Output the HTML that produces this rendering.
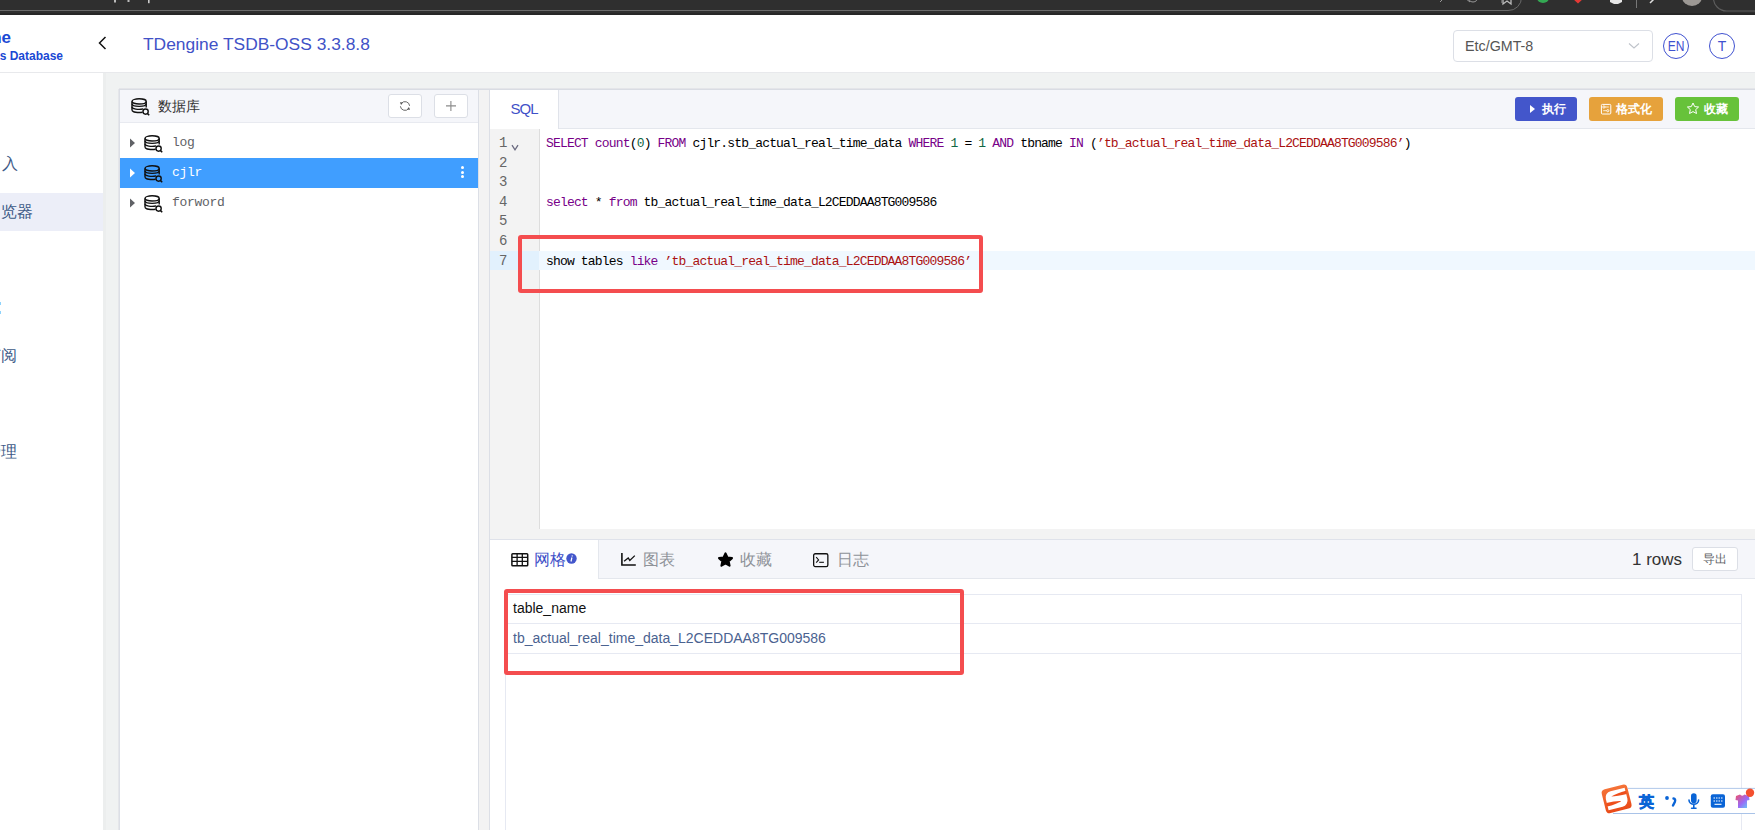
<!DOCTYPE html>
<html><head><meta charset="utf-8">
<style>
*{box-sizing:border-box;margin:0;padding:0}
html,body{width:1755px;height:830px;overflow:hidden;background:#f0f2f2;font-family:"Liberation Sans",sans-serif;color:#333}
.a{position:absolute}
.mono{font-family:"Liberation Mono",monospace}
.t{white-space:pre;line-height:1}
.code{font-family:"Liberation Mono",monospace;font-size:13px;letter-spacing:-0.83px;white-space:pre;color:#000;line-height:19.6px;height:19.6px}
.k{color:#708}.n{color:#164}.s{color:#a11}
.ln{font-family:"Liberation Mono",monospace;font-size:14px;color:#666;width:20px;text-align:left;line-height:19.6px}
.redbox{border:4px solid #f44d4f;border-radius:3px}
</style></head><body>
<!-- browser chrome strip -->
<svg class="a" style="left:0;top:0" width="1755" height="15" viewBox="0 0 1755 15">
 <rect x="0" y="0" width="1755" height="15" fill="#2f2f2f"/>
 <rect x="0" y="13" width="1755" height="2" fill="#272727"/>
 <path d="M-5 10.5 H1508 A13 13 0 0 0 1521.5 -3" fill="none" stroke="#6a6a6a" stroke-width="1"/>
 <path d="M1713.5 -3 A13 13 0 0 0 1727 11 H1760" fill="none" stroke="#5c5c5c" stroke-width="1.2"/>
 <ellipse cx="1543" cy="-2" rx="6" ry="5" fill="#34a853"/>
 <path d="M1572 -2 L1578 3.5 L1584 -2 Z" fill="#e53935"/>
 <path d="M1610 -2 H1622 V2 L1618 4 L1614 4 L1610 2 Z" fill="#e6e6e6"/>
 <rect x="1636" y="0" width="1" height="8" fill="#777"/>
 <path d="M1650 3 L1656 -3" stroke="#ddd" stroke-width="1.5"/>
 <ellipse cx="1692" cy="-3" rx="10" ry="9" fill="#9c9894"/>
 <path d="M1465 -2 L1470 2 M1440 2 L1444 -2" stroke="#999" stroke-width="1"/>
 <circle cx="1473" cy="-3" r="5" fill="none" stroke="#999" stroke-width="1"/>
 <rect x="1501" y="-3" width="1" height="6" fill="#666"/>
 <rect x="114" y="0" width="2" height="2.5" fill="#bbb"/>
 <rect x="127.5" y="0" width="2" height="2" fill="#bbb"/>
 <rect x="148" y="0" width="1.6" height="3.2" fill="#ccc"/>
 <path d="M1503 -2 V4 L1507 1 L1511 4 V-2" fill="none" stroke="#bbb" stroke-width="1.3"/>
</svg>
<!-- header -->
<div class="a" style="left:0;top:15px;width:1755px;height:58px;background:#fff;border-bottom:1px solid #e8e9ec"></div>
<div class="a t" style="right:1744px;top:29px;font-size:17px;font-weight:700;color:#1a48d4">TDengine</div>
<div class="a t" style="right:1692px;top:49.5px;font-size:12px;font-weight:700;color:#1a48d4">Time-Series Database</div>
<svg class="a" style="left:96px;top:35px" width="14" height="16" viewBox="0 0 14 16"><path d="M9.5 2 L3.5 8 L9.5 14" fill="none" stroke="#111" stroke-width="1.5"/></svg>
<div class="a t" style="left:143px;top:36px;font-size:17.4px;color:#4152c7">TDengine TSDB-OSS 3.3.8.8</div>

<div class="a" style="left:1453px;top:30px;width:200px;height:32px;border:1px solid #dcdfe6;border-radius:4px;background:#fff"></div>
<div class="a t" style="left:1465px;top:39px;font-size:14.3px;color:#555">Etc/GMT-8</div>
<svg class="a" style="left:1627px;top:41px" width="14" height="9" viewBox="0 0 14 9"><path d="M2 2.5 L7 7 L12 2.5" fill="none" stroke="#bfc3ca" stroke-width="1.1"/></svg>
<div class="a" style="left:1663px;top:33px;width:26px;height:26px;border:1.4px solid #3f51d0;border-radius:50%"></div>
<div class="a t" style="left:1663px;top:39px;width:26px;text-align:center;font-size:14px;color:#3f51d0;transform:scaleX(0.86)">EN</div>
<div class="a" style="left:1709px;top:33px;width:26px;height:26px;border:1.4px solid #3f51d0;border-radius:50%"></div>
<div class="a t" style="left:1709px;top:39px;width:26px;text-align:center;font-size:14px;color:#3f51d0">T</div>

<!-- sidebar -->
<div class="a" style="left:0;top:73px;width:103px;height:757px;background:#fff"></div>
<div class="a" style="left:0;top:193px;width:103px;height:38px;background:#eceef8"></div>
<div class="a t" style="left:1.5px;top:156px;font-size:15.5px;color:#3d5a87">入</div>
<div class="a t" style="left:0.8px;top:204px;font-size:15.5px;color:#3d5a87">览器</div>
<div class="a t" style="left:-15.5px;top:348px;font-size:15.5px;color:#3d5a87">订阅</div>
<div class="a t" style="left:-15.5px;top:444px;font-size:15.5px;color:#3d5a87">管理</div>
<div class="a" style="left:0;top:302px;width:1px;height:3px;background:#8fd3fb"></div>
<div class="a" style="left:0;top:311px;width:1px;height:3px;background:#8fd3fb"></div>

<div class="a" style="left:103px;top:73px;width:3px;height:757px;background:#eceeee"></div>
<div class="a" style="left:118px;top:89px;width:1px;height:741px;background:#e5e6ea"></div>
<!-- left db panel -->
<div class="a" style="left:119px;top:88px;width:1650px;height:760px;background:#f3f3f3;border-top:1px solid #e4e5e9"></div><div class="a" style="left:119px;top:89px;width:1650px;height:1px;background:#d9dce3"></div>
<div class="a" style="left:119px;top:90px;width:360px;height:760px;background:#fff;border:1px solid #dcdfe6;border-top:none"></div>
<div class="a" style="left:120px;top:90px;width:358px;height:33px;background:#f5f6fa;border-bottom:1px solid #e8eaf0"></div>
<svg width="0" height="0" style="position:absolute"><defs>
<symbol id="db" viewBox="0 0 20 18">
 <g fill="none" stroke="currentColor" stroke-width="1.4">
  <ellipse cx="9.1" cy="3.4" rx="7.1" ry="2.6"/>
  <path d="M2 3.4 V12.2 M16.2 3.4 V9.6"/>
  <path d="M2 5.8 A7.1 2.6 0 0 0 16.2 5.8"/>
  <path d="M2 8.7 A7.1 2.6 0 0 0 13.2 10.9"/>
  <path d="M2 12.2 A7.1 2.6 0 0 0 12.6 14.2"/>
 </g>
 <circle cx="15.6" cy="13.6" r="2.6" fill="var(--bg)" stroke="currentColor" stroke-width="1.4"/>
 <path d="M17.4 15.5 L19.2 17.3" stroke="currentColor" stroke-width="1.6"/>
</symbol></defs></svg>
<svg class="a" style="left:130px;top:98px;color:#111;--bg:#f5f6fa" width="20" height="18"><use href="#db"/></svg>
<div class="a t" style="left:158px;top:99px;font-size:14px;color:#333">数据库</div>
<div class="a" style="left:388px;top:94px;width:34px;height:24px;background:#fff;border:1px solid #dcdfe6;border-radius:3px"></div>
<svg class="a" style="left:399px;top:100px" width="12" height="12" viewBox="0 0 12 12"><g fill="none" stroke="#666" stroke-width="1"><path d="M2.4 3.4 A4.6 4.6 0 0 1 10.6 5.8"/><path d="M9.6 8.6 A4.6 4.6 0 0 1 1.4 6.3"/></g><path d="M0.9 2.3 L3.9 2.4 L2.1 4.9 Z M11.1 9.7 L8.1 9.6 L9.9 7.1 Z" fill="#555"/></svg>
<div class="a" style="left:434px;top:94px;width:34px;height:24px;background:#fff;border:1px solid #dcdfe6;border-radius:3px"></div>
<svg class="a" style="left:445px;top:100px" width="12" height="12" viewBox="0 0 12 12"><path d="M5.9 1 V11 M1 5.9 H11" stroke="#8a8a8a" stroke-width="1.1"/></svg>

<!-- tree -->
<div class="a" style="left:120px;top:158px;width:358px;height:30px;background:#409eff"></div>
<svg class="a" style="left:129px;top:138px" width="7" height="10" viewBox="0 0 7 10"><path d="M1 0.5 L6 5 L1 9.5Z" fill="#606266"/></svg>
<svg class="a" style="left:129px;top:168px" width="7" height="10" viewBox="0 0 7 10"><path d="M1 0.5 L6 5 L1 9.5Z" fill="#fff"/></svg>
<svg class="a" style="left:129px;top:198px" width="7" height="10" viewBox="0 0 7 10"><path d="M1 0.5 L6 5 L1 9.5Z" fill="#606266"/></svg>
<svg class="a" style="left:143px;top:135px;color:#111;--bg:#fff" width="20" height="18"><use href="#db"/></svg>
<svg class="a" style="left:143px;top:165px;color:#111;--bg:#409eff" width="20" height="18"><use href="#db"/></svg>
<svg class="a" style="left:143px;top:195px;color:#111;--bg:#fff" width="20" height="18"><use href="#db"/></svg>
<div class="a t mono" style="left:172px;top:136px;font-size:13px;letter-spacing:-0.3px;color:#606266">log</div>
<div class="a t mono" style="left:172px;top:166px;font-size:13px;letter-spacing:-0.3px;color:#fff">cjlr</div>
<div class="a t mono" style="left:172px;top:196px;font-size:13px;letter-spacing:-0.3px;color:#606266">forword</div>
<div class="a" style="left:461px;top:166px;width:3px;height:3px;border-radius:50%;background:#fff"></div>
<div class="a" style="left:461px;top:170.5px;width:3px;height:3px;border-radius:50%;background:#fff"></div>
<div class="a" style="left:461px;top:175px;width:3px;height:3px;border-radius:50%;background:#fff"></div>

<!-- right panel -->
<div class="a" style="left:489px;top:90px;width:1280px;height:760px;background:#fff;border:1px solid #dcdfe6;border-top:none"></div>
<div class="a" style="left:490px;top:90px;width:1270px;height:39px;background:#f5f6fa;border-bottom:1px solid #e4e7ed"></div>
<div class="a" style="left:490px;top:90px;width:69px;height:39px;background:#fff;border-right:1.5px solid #e0e3ea"></div>
<div class="a t" style="left:510.5px;top:101px;font-size:15px;letter-spacing:-1px;color:#3f51c8">SQL</div>

<!-- action buttons -->
<div class="a" style="left:1515px;top:97px;width:62px;height:24px;background:#4356cb;border-radius:3px"></div>
<svg class="a" style="left:1529px;top:104px" width="7" height="10" viewBox="0 0 7 10"><path d="M1 1 L6 5 L1 9Z" fill="#fff"/></svg>
<div class="a t" style="left:1542px;top:103px;font-size:12px;font-weight:700;color:#fff">执行</div>
<div class="a" style="left:1589px;top:97px;width:74px;height:24px;background:#e6a23c;border-radius:3px"></div>
<svg class="a" style="left:1600px;top:103px" width="12" height="12" viewBox="0 0 12 12"><rect x="1.4" y="1.4" width="9.4" height="9.6" rx="1" fill="none" stroke="#fff" stroke-width="1"/><circle cx="3.9" cy="4" r="1.1" fill="none" stroke="#fff" stroke-width="0.9"/><path d="M5 4 H8.8 M3.2 7.7 H6.6" stroke="#fff" stroke-width="0.8"/><circle cx="7.8" cy="7.7" r="1.1" fill="none" stroke="#fff" stroke-width="0.9"/></svg>
<div class="a t" style="left:1616px;top:103px;font-size:12px;font-weight:700;color:#fff">格式化</div>
<div class="a" style="left:1675px;top:97px;width:64px;height:24px;background:#67c23a;border-radius:3px"></div>
<svg class="a" style="left:1686px;top:102px" width="14" height="13" viewBox="0 0 14 13"><path d="M7 1 L8.7 4.6 L12.6 5 L9.7 7.6 L10.5 11.5 L7 9.6 L3.5 11.5 L4.3 7.6 L1.4 5 L5.3 4.6 Z" fill="none" stroke="#fff" stroke-width="1" stroke-linejoin="round"/></svg>
<div class="a t" style="left:1704px;top:102.5px;font-size:12px;font-weight:700;color:#fff">收藏</div>

<!-- editor -->
<div class="a" style="left:490px;top:129px;width:50px;height:400px;background:#f3f3f3;border-right:1px solid #ddd"></div>
<div class="a" style="left:490px;top:251px;width:1265px;height:19px;background:#f0f8ff"></div>
<div class="a" style="left:490px;top:251px;width:49px;height:19px;background:#e2f1fd"></div>
<div class="a" style="left:499px;top:134px">
 <div class="ln">1</div><div class="ln">2</div><div class="ln">3</div><div class="ln">4</div><div class="ln">5</div><div class="ln">6</div><div class="ln">7</div>
</div>
<svg class="a" style="left:511px;top:144px" width="8" height="7" viewBox="0 0 8 7"><path d="M1 1.2 L4 5.8 L7 1.2" fill="none" stroke="#6a6a80" stroke-width="1.3"/></svg>
<div class="a" style="left:546px;top:134.4px">
 <div class="code"><span class="k">SELECT</span> <span class="k">count</span>(<span class="n">0</span>) <span class="k">FROM</span> cjlr.stb_actual_real_time_data <span class="k">WHERE</span> <span class="n">1</span> = <span class="n">1</span> <span class="k">AND</span> tbname <span class="k">IN</span> (<span class="s">&#8217;tb_actual_real_time_data_L2CEDDAA8TG009586&#8217;</span>)</div>
 <div class="code"> </div>
 <div class="code"> </div>
 <div class="code"><span class="k">select</span> * <span class="k">from</span> tb_actual_real_time_data_L2CEDDAA8TG009586</div>
 <div class="code"> </div>
 <div class="code"> </div>
 <div class="code">show tables <span class="k">like</span> <span class="s">&#8217;tb_actual_real_time_data_L2CEDDAA8TG009586&#8217;</span></div>
</div>
<div class="a redbox" style="left:518px;top:235px;width:465px;height:58px"></div>

<!-- splitter gap -->
<div class="a" style="left:490px;top:529px;width:1265px;height:11px;background:#f3f3f3;border-bottom:1px solid #dfe2ea"></div>

<!-- results tab bar -->
<div class="a" style="left:490px;top:540px;width:1265px;height:39px;background:#f5f6fa;border-bottom:1px solid #e4e7ed"></div>
<div class="a" style="left:490px;top:540px;width:109px;height:39px;background:#fff;border-right:1px solid #e4e7ed"></div>
<svg class="a" style="left:510px;top:552px" width="19" height="15" viewBox="0 0 19 15"><rect x="1.9" y="1.8" width="15.8" height="11.9" rx="0.8" fill="none" stroke="#111" stroke-width="1.5"/><path d="M1.9 5.3 H17.7 M1.9 9.4 H17.7 M7.1 1.8 V13.7 M12.3 1.8 V13.7" stroke="#111" stroke-width="1.3"/></svg>
<div class="a t" style="left:534px;top:551.5px;font-size:15.5px;color:#3f51c8">网格</div>
<svg class="a" style="left:566px;top:553px" width="11" height="11" viewBox="0 0 11 11"><circle cx="5.5" cy="5.5" r="5.2" fill="#4356cb"/><path d="M5.9 4.5 L5 8.5" stroke="#fff" stroke-width="1.2"/><circle cx="6.2" cy="2.9" r="0.7" fill="#fff"/></svg>
<svg class="a" style="left:620px;top:552px" width="17" height="15" viewBox="0 0 17 15"><path d="M1.9 1 V13 H15.8" fill="none" stroke="#111" stroke-width="1.6"/><path d="M4.1 9.2 L8.2 5.9 L9.8 8.4 L14.8 3.6" fill="none" stroke="#111" stroke-width="1.3"/></svg>
<div class="a t" style="left:643px;top:552px;font-size:15.5px;color:#8f9399">图表</div>
<svg class="a" style="left:717px;top:551px" width="17" height="17" viewBox="0 0 17 17"><path d="M8.5 2.4 L10.5 6.6 L14.9 7.1 L11.6 10.2 L12.5 14.6 L8.5 12.4 L4.5 14.6 L5.4 10.2 L2.1 7.1 L6.5 6.6 Z" fill="#000" stroke="#000" stroke-width="2.2" stroke-linejoin="round"/></svg>
<div class="a t" style="left:740px;top:552px;font-size:15.5px;color:#8f9399">收藏</div>
<svg class="a" style="left:812px;top:552px" width="17" height="16" viewBox="0 0 17 16"><rect x="1.65" y="1.75" width="14.2" height="12.8" rx="1.6" fill="none" stroke="#111" stroke-width="1.3"/><path d="M4.2 5.2 L6.6 7.9 L4.2 10.6" fill="none" stroke="#111" stroke-width="1.1"/><path d="M7.2 10.3 H11.9" stroke="#111" stroke-width="1.1"/></svg>
<div class="a t" style="left:837px;top:552px;font-size:15.5px;color:#8f9399">日志</div>
<div class="a t" style="left:1632px;top:551px;font-size:17px;color:#333">1 rows</div>
<div class="a" style="left:1692px;top:547px;width:46px;height:24px;background:#fff;border:1px solid #dcdfe6;border-radius:3px"></div>
<div class="a t" style="left:1703px;top:553px;font-size:12px;color:#606266">导出</div>

<!-- results table -->
<div class="a" style="left:505px;top:594px;width:1237px;height:250px;border:1px solid #e6e9f2"></div>
<div class="a" style="left:505px;top:623px;width:1237px;height:1px;background:#e6e9f2"></div>
<div class="a" style="left:505px;top:653px;width:1237px;height:1px;background:#e6e9f2"></div>
<div class="a t" style="left:513px;top:601px;font-size:14px;color:#111">table_name</div>
<div class="a t" style="left:513px;top:631px;font-size:14px;color:#4a6290">tb_actual_real_time_data_L2CEDDAA8TG009586</div>
<div class="a redbox" style="left:504px;top:589px;width:460px;height:86px"></div>

<!-- sogou IME -->
<svg class="a" style="left:1595px;top:780px" width="160" height="40" viewBox="0 0 160 40">
 <defs>
  <linearGradient id="og" x1="0" y1="0" x2="0" y2="1"><stop offset="0" stop-color="#f57338"/><stop offset="1" stop-color="#e94a18"/></linearGradient>
  <linearGradient id="sg" x1="0" y1="0" x2="1" y2="1"><stop offset="0" stop-color="#f0506a"/><stop offset="0.55" stop-color="#9a6af5"/><stop offset="1" stop-color="#5fd8f8"/></linearGradient>
 </defs>
 <path d="M160 8.4 H33 M18 33.5 H160" stroke="#a9c3e8" stroke-width="1"/>
 <rect x="25" y="8.9" width="140" height="24.1" fill="#fff"/>
 <g transform="translate(21.6 18.9) rotate(-14)">
  <rect x="-13.2" y="-12.3" width="26.4" height="24.6" rx="4" fill="url(#og)"/>
  <path d="M10.5 -9 H-4 A6.5 6.5 0 0 0 -10.5 -2.5 V9 H4 A6.5 6.5 0 0 0 10.5 2.5 Z" fill="#fff"/>
  <path d="M11 -5.6 L11 -2.2 C5 -2.4 -1 -2.8 -4.6 -3.6 C -1 -4.8 5 -5.4 11 -5.6 Z" fill="#ee4f1c"/>
  <path d="M-11 1.6 L-11 5.2 C-5 5 1 4.4 3.8 3.3 C1 2.2 -5 1.7 -11 1.6 Z" fill="#ee4f1c"/>
 </g>
 <text x="43.5" y="27" font-size="14.5" font-weight="700" fill="#0a64d6" stroke="#0a64d6" stroke-width="0.7" font-family="Liberation Sans, sans-serif">英</text>
 <circle cx="72" cy="18" r="1.9" fill="#0a64d6"/>
 <path d="M78.5 18.5 C80 18.5 80.6 20 79.8 22 L78 25.5" fill="none" stroke="#0a64d6" stroke-width="2.4" stroke-linecap="round"/>
 <rect x="96" y="13.2" width="5.6" height="10.2" rx="2.8" fill="#0a64d6"/>
 <path d="M94 20 C94 25.6 103.6 25.6 103.6 20 M98.8 24.8 V28 M96.6 28.3 H101" fill="none" stroke="#0a64d6" stroke-width="1.6" stroke-linecap="round"/>
 <rect x="115.8" y="14.2" width="14.2" height="13.6" rx="2" fill="#0a64d6"/>
 <path d="M118.5 18 H127.5 M118.5 21 H127.5" stroke="#fff" stroke-width="1" stroke-dasharray="1.5 1"/>
 <path d="M119.5 24.3 H126.5" stroke="#fff" stroke-width="1.1"/>
 <path d="M141 16 L145 14.6 C146 16 148.5 16 149.5 14.6 L154 16 L154.5 20 L152 20.4 V28 H143 V20.4 L140.5 20 Z" fill="url(#sg)"/>
 <circle cx="155" cy="12.8" r="4.2" fill="#f4502f"/>
</svg>
</body></html>
